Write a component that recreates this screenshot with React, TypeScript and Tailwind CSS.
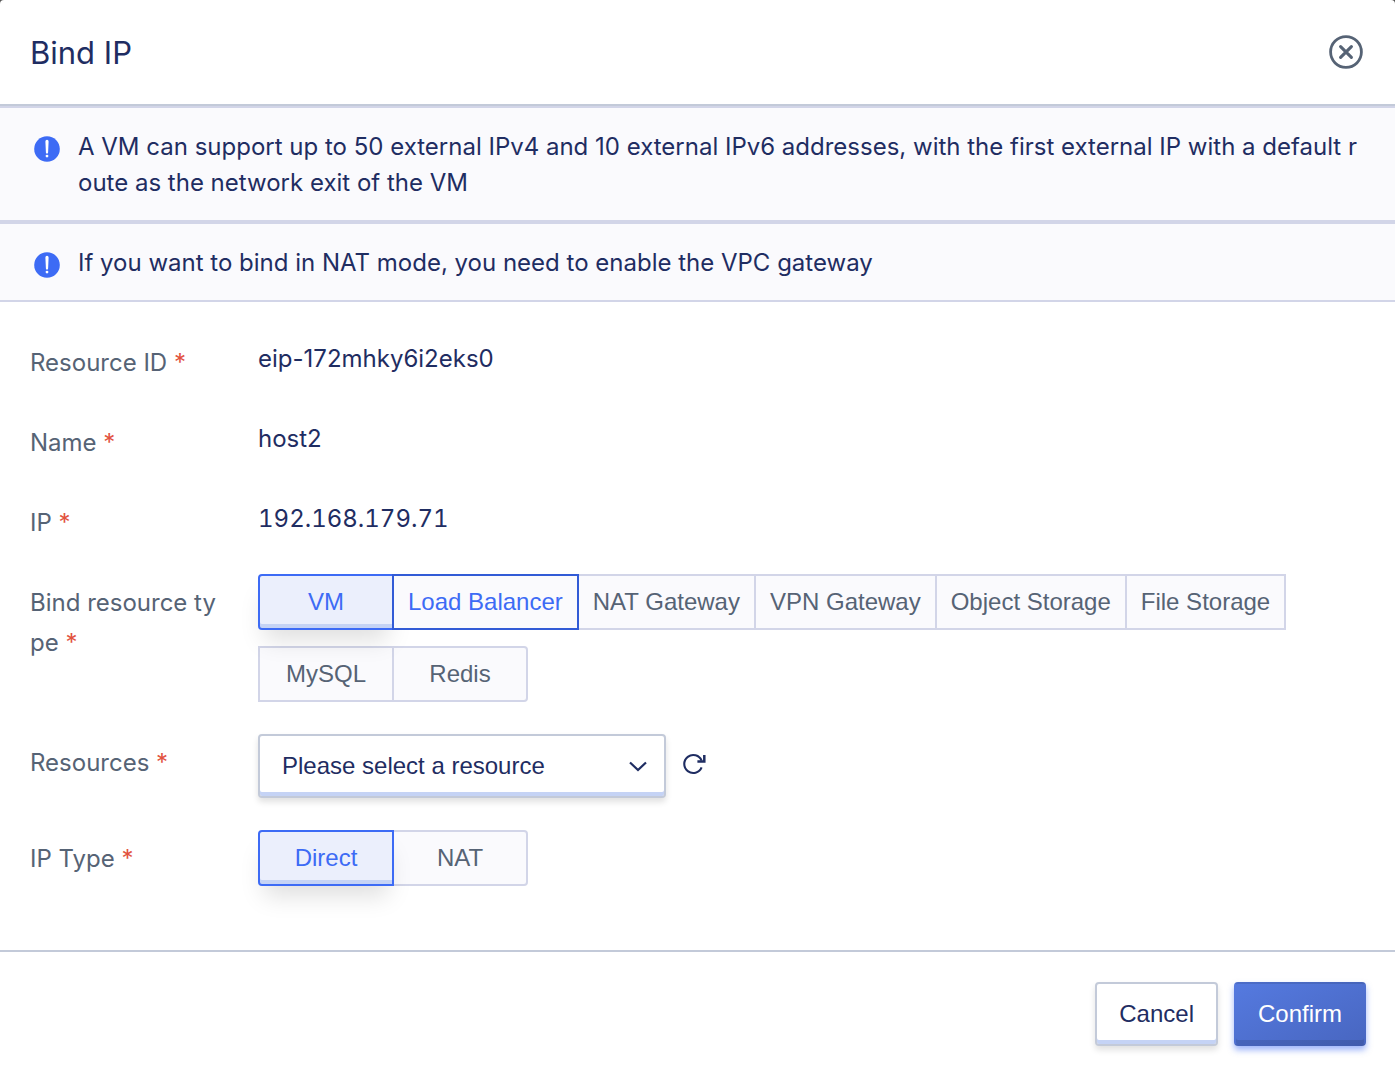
import { useState, type ReactNode } from "react";

function InfoIcon() {
  return (
    <svg className="mt-[7px] size-[26px] shrink-0" viewBox="0 0 26 26" aria-hidden="true">
      <circle cx="13" cy="13" r="12.8" fill="#3d6bf5" />
      <path d="M11.4 5.4a1.6 1.6 0 0 1 3.2 0l-.5 11.2a1.1 1.1 0 0 1-2.2 0z" fill="#fff" />
      <circle cx="13" cy="20.1" r="1.4" fill="#fff" />
    </svg>
  );
}

function Notice({ children }: { children: ReactNode }) {
  return (
    <div className="flex gap-[18px] border-y-2 border-[#d2d5e8] bg-[#fafafd] pt-[21px] pr-9 pb-[19px] pl-[34px]">
      <InfoIcon />
      <p className="min-w-0 text-2xl leading-9 break-all">{children}</p>
    </div>
  );
}

function Label({ text, htmlFor, id }: { text: string; htmlFor?: string; id?: string }) {
  const Tag = htmlFor ? "label" : "span";
  return (
    <Tag
      id={id}
      {...(htmlFor ? { htmlFor } : {})}
      className="w-[198px] shrink-0 pt-[9px] text-2xl leading-10 break-all text-[#566375]"
    >
      {text} <span className="text-[#e2533f]">*</span>
    </Tag>
  );
}

function Row({
  label,
  htmlFor,
  id,
  children,
}: {
  label: string;
  htmlFor?: string;
  id?: string;
  children: ReactNode;
}) {
  return (
    <div className="flex items-start gap-[30px]">
      <Label text={label} htmlFor={htmlFor} id={id} />
      <div className="min-w-0 flex-1">{children}</div>
    </div>
  );
}

function Value({ children, numeric = false }: { children: ReactNode; numeric?: boolean }) {
  return (
    <p className={`pt-px text-2xl leading-[48px] ${numeric ? "tabular-nums" : ""}`}>{children}</p>
  );
}

function Segmented({
  name,
  labelledBy,
  options,
  highlighted,
}: {
  name: string;
  labelledBy: string;
  options: string[];
  highlighted?: string;
}) {
  const [value, setValue] = useState(options[0]);
  return (
    <div role="radiogroup" aria-labelledby={labelledBy} className="ml-[2px] flex flex-wrap gap-y-4">
      {options.map((o) => {
        const tone =
          o === value
            ? "z-10 border-[#3d6bf5] bg-[#ebeffc] text-[#3d6bf5] shadow-[inset_0_-4px_0_#c5d3f5,0_16px_24px_-6px_rgba(0,0,0,0.13)]"
            : o === highlighted
              ? "z-20 border-[#325bd6] bg-[#fafafd] text-[#3d6bf5]"
              : "border-[#d2d5e8] bg-[#fafafd] text-[#566375]";
        const corner =
          o === options[0] ? "rounded-l" : o === options[options.length - 1] ? "rounded-r" : "";
        return (
          <label
            key={o}
            className={`relative -ml-[2px] flex h-14 min-w-[136px] cursor-pointer items-center justify-center border-2 px-[14px] font-['Liberation_Sans',Arial,sans-serif] text-2xl whitespace-nowrap ${tone} ${corner}`}
          >
            <input
              type="radio"
              name={name}
              value={o}
              checked={o === value}
              onChange={() => setValue(o)}
              className="sr-only"
            />
            {o}
          </label>
        );
      })}
    </div>
  );
}

export default function App() {
  return (
    <div className="min-h-screen bg-[#555]">
      <section
        role="dialog"
        aria-labelledby="title"
        className="flex min-h-screen flex-col rounded-t bg-white font-[Inter,sans-serif] text-[#1f2d62]"
      >
        <header className="flex items-center justify-between border-b-2 border-[#c3cad9] py-8 pr-8 pl-[30px]">
          <h1 id="title" className="pt-[2px] text-[31px] leading-[38px]">
            Bind IP
          </h1>
          <button type="button" aria-label="Close" className="text-[#566375]">
            <svg className="size-[34px]" viewBox="0 0 34 34" fill="none" stroke="currentColor" aria-hidden="true">
              <circle cx="17" cy="17" r="15.4" strokeWidth="2.8" />
              <path d="M11.6 11.6l10.8 10.8M22.4 11.6L11.6 22.4" strokeWidth="3.1" strokeLinecap="round" />
            </svg>
          </button>
        </header>

        <Notice>
          A VM can support up to 50 external IPv4 and 10 external IPv6 addresses, with the first external IP with a
          default route as the network exit of the VM
        </Notice>
        <Notice>If you want to bind in NAT mode, you need to enable the VPC gateway</Notice>

        <div className="flex flex-1 flex-col px-[30px] pt-8 pb-16">
          <div className="mb-[31px] flex flex-col gap-[31px]">
            <Row label="Resource ID">
              <Value>eip-172mhky6i2eks0</Value>
            </Row>
            <Row label="Name">
              <Value>host2</Value>
            </Row>
            <Row label="IP">
              <Value numeric>192.168.179.71</Value>
            </Row>
          </div>
          <div className="flex flex-col gap-8">
            <Row label="Bind resource type" id="type-label">
              <Segmented
                name="type"
                labelledBy="type-label"
                highlighted="Load Balancer"
                options={[
                  "VM",
                  "Load Balancer",
                  "NAT Gateway",
                  "VPN Gateway",
                  "Object Storage",
                  "File Storage",
                  "MySQL",
                  "Redis",
                ]}
              />
            </Row>
            <Row label="Resources" htmlFor="resource">
              <div className="flex items-center gap-4">
                <div className="relative w-[408px]">
                  <select
                    id="resource"
                    className="h-16 w-full appearance-none rounded border-2 border-[#c3cad9] bg-white pr-14 pl-[22px] font-['Liberation_Sans',Arial,sans-serif] text-2xl shadow-[inset_0_-4px_0_#c5d3f5,0_4px_6px_rgba(0,0,0,0.12)]"
                  >
                    <option>Please select a resource</option>
                  </select>
                  <svg
                    className="pointer-events-none absolute top-[26px] right-[18px] h-3 w-5"
                    viewBox="0 0 20 12"
                    fill="none"
                    stroke="currentColor"
                    strokeWidth="2.2"
                    aria-hidden="true"
                  >
                    <path d="M2 2.5l8 7.5 8-7.5" />
                  </svg>
                </div>
                <button type="button" aria-label="Refresh">
                  <svg className="mb-1 size-6" viewBox="0 0 24 24" fill="none" stroke="currentColor" aria-hidden="true">
                    <path d="M19.6 15.4A9 9 0 1 1 19.6 8.6" strokeWidth="2.1" />
                    <path d="M22.3 3V9.4H15.4" strokeWidth="2.5" />
                  </svg>
                </button>
              </div>
            </Row>
            <Row label="IP Type" id="ip-type-label">
              <Segmented name="ip-type" labelledBy="ip-type-label" options={["Direct", "NAT"]} />
            </Row>
          </div>
        </div>

        <footer className="flex justify-end gap-4 border-t-2 border-[#c3cad9] pt-[30px] pr-[29px] pb-7 font-['Liberation_Sans',Arial,sans-serif] text-2xl">
          <button
            type="button"
            className="h-16 rounded border-2 border-[#c3cad9] bg-white px-[22px] shadow-[inset_0_-4px_0_#c5d3f5,0_4px_6px_rgba(0,0,0,0.12)]"
          >
            Cancel
          </button>
          <button
            type="button"
            className="h-16 rounded border-2 border-x-transparent border-y-black/10 bg-linear-to-br from-[#557ae0] to-[#4866c0] bg-origin-border px-[22px] text-white shadow-[inset_0_-4px_0_rgba(0,0,0,0.1),0_4px_6px_rgba(61,107,245,0.5)]"
          >
            Confirm
          </button>
        </footer>
      </section>
    </div>
  );
}
